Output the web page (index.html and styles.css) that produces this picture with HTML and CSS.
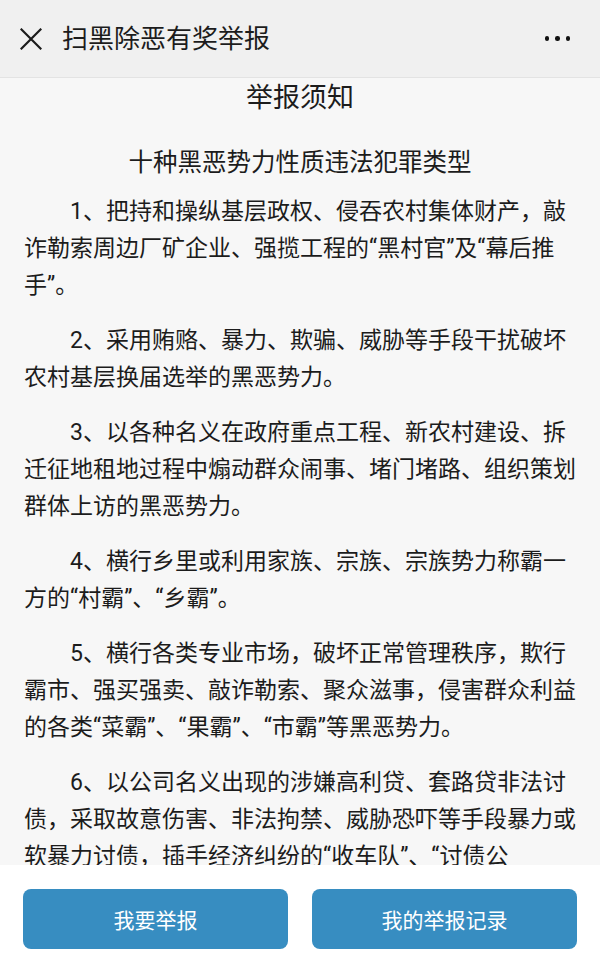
FILE: index.html
```html
<!DOCTYPE html>
<html lang="zh-CN">
<head>
<meta charset="utf-8">
<title>扫黑除恶有奖举报</title>
<link rel="stylesheet" href="styles.css">
</head>
<body>
<div class="page">
  <header class="topbar">
    <svg class="close" width="22" height="22" viewBox="0 0 22 22" aria-hidden="true">
      <path d="M1.5 1.5 L20.5 20.5 M20.5 1.5 L1.5 20.5" stroke="#1c1c1c" stroke-width="2.2" stroke-linecap="square" fill="none"/>
    </svg>
    <div class="title">扫黑除恶有奖举报</div>
    <div class="more" aria-hidden="true"><span></span><span></span><span></span></div>
  </header>
  <main class="content">
    <h1 class="heading">举报须知</h1>
    <h2 class="subheading">十种黑恶势力性质违法犯罪类型</h2>
    <p>1、把持和操纵基层政权、侵吞农村集体财产，敲诈勒索周边厂矿企业、强揽工程的“黑村官”及“幕后推手”。</p>
    <p>2、采用贿赂、暴力、欺骗、威胁等手段干扰破坏农村基层换届选举的黑恶势力。</p>
    <p>3、以各种名义在政府重点工程、新农村建设、拆迁征地租地过程中煽动群众闹事、堵门堵路、组织策划群体上访的黑恶势力。</p>
    <p>4、横行乡里或利用家族、宗族、宗族势力称霸一方的“村霸”、“乡霸”。</p>
    <p>5、横行各类专业市场，破坏正常管理秩序，欺行霸市、强买强卖、敲诈勒索、聚众滋事，侵害群众利益的各类“菜霸”、“果霸”、“市霸”等黑恶势力。</p>
    <p>6、以公司名义出现的涉嫌高利贷、套路贷非法讨债，采取故意伤害、非法拘禁、威胁恐吓等手段暴力或软暴力讨债，插手经济纠纷的“收车队”、“讨债公<span class="keep">司”等黑恶势力。</span></p>
    <p>7、操纵、经营“黄赌毒”等违法犯罪活动的黑恶势力。</p>
  </main>
  <footer class="actions">
    <button class="btn" type="button">我要举报</button>
    <button class="btn" type="button">我的举报记录</button>
  </footer>
</div>
</body>
</html>
```
FILE: styles.css
```css
html, body {
  margin: 0;
  padding: 0;
  height: 100%;
}
body {
  font-family: Roboto, "Noto Sans CJK SC", sans-serif;
  color: #1c1c1c;
  background: #f7f7f7;
}
.page {
  height: 973px;
  display: flex;
  flex-direction: column;
  overflow: hidden;
}
.topbar {
  flex: 0 0 auto;
  height: 78px;
  box-sizing: border-box;
  background: #f0f0f0;
  border-bottom: 1px solid #e3e3e3;
  display: flex;
  align-items: center;
  padding: 0 30px 0 20px;
}
.close {
  flex: 0 0 auto;
  display: block;
}
.title {
  margin-left: 20px;
  font-size: 26px;
  line-height: 1;
  color: #1c1c1c;
  flex: 1 1 auto;
}
.more {
  display: flex;
  gap: 6px;
  align-items: center;
}
.more span {
  width: 4.5px;
  height: 4.5px;
  border-radius: 50%;
  background: #111;
}
.content {
  flex: 1 1 auto;
  overflow: hidden;
  padding: 0 24px;
  background: #f7f7f7;
}
.heading {
  margin: 0;
  text-align: center;
  font-size: 27px;
  font-weight: normal;
  line-height: 40px;
}
.subheading {
  margin: 26px 0 0;
  text-align: center;
  font-size: 24.5px;
  font-weight: normal;
  line-height: 37px;
}
.content p {
  margin: 12px 0 18px;
  font-size: 23px;
  line-height: 37px;
  text-indent: 2em;
}
.content p + p {
  margin-top: 0;
}
.keep {
  white-space: nowrap;
}
.actions {
  flex: 0 0 auto;
  height: 108px;
  box-sizing: border-box;
  background: #ffffff;
  display: flex;
  gap: 24px;
  padding: 24px 23px;
}
.btn {
  flex: 1 1 0;
  height: 60px;
  border: none;
  border-radius: 8px;
  background: #378dc1;
  color: #ffffff;
  font-family: Roboto, "Noto Sans CJK SC", sans-serif;
  font-size: 21px;
  padding: 0;
}
```
